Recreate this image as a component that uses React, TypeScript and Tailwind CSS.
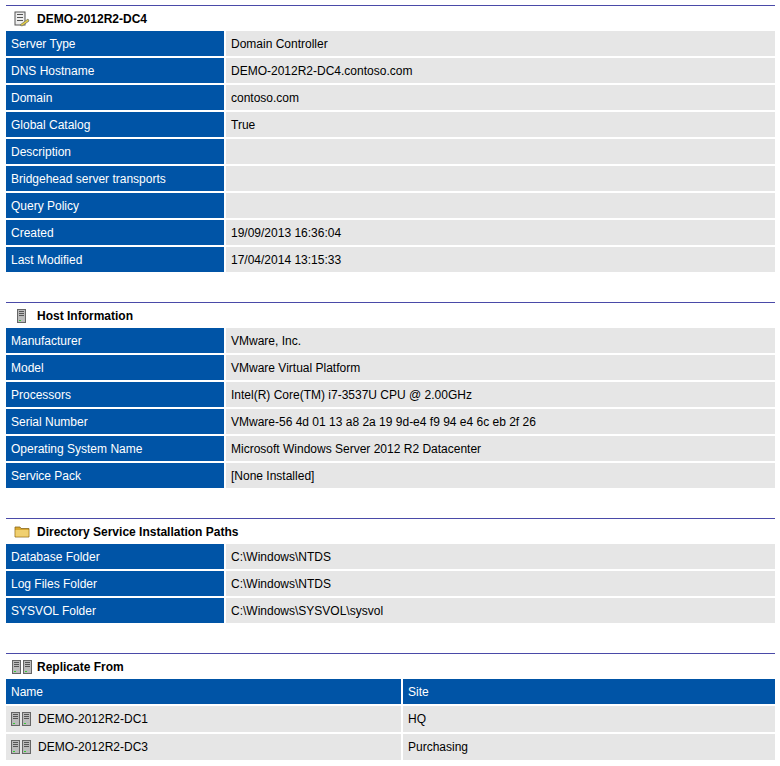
const F = { fontFamily: '"Liberation Sans", Arial, sans-serif' };

function ServerIcon() {
  return (
    <svg width="9" height="14" viewBox="0 0 9 14">
      <rect x="0.5" y="0.5" width="8" height="13" fill="#bbb" stroke="#666" />
      <rect x="2" y="2" width="5" height="1" fill="#555" />
      <rect x="2" y="4" width="5" height="1" fill="#555" />
      <rect x="2" y="6" width="5" height="1" fill="#555" />
      <rect x="2" y="11" width="2" height="1" fill="#3c3" />
    </svg>
  );
}

function DualServer() {
  return (
    <span className="inline-flex gap-[2px]">
      <ServerIcon />
      <ServerIcon />
    </span>
  );
}

function DcIcon() {
  return (
    <svg width="16" height="16" viewBox="0 0 16 16">
      <rect x="1" y="1" width="10" height="13" fill="#eee" stroke="#555" />
      <rect x="3" y="3" width="6" height="1" fill="#555" />
      <rect x="3" y="6" width="6" height="1" fill="#555" />
      <rect x="3" y="9" width="6" height="1" fill="#555" />
      <path d="M6 14 L14 8 L15 10 L8 15 Z" fill="#e8d040" stroke="#776" strokeWidth="0.8" />
    </svg>
  );
}

function FolderIcon() {
  return (
    <svg width="16" height="13" viewBox="0 0 16 13">
      <path d="M1 2 h5 l1 1.5 h8 v8.5 h-14 Z" fill="#d9a830" stroke="#8a6a20" strokeWidth="0.8" />
      <rect x="1.5" y="5" width="13" height="6.5" fill="#f0d070" />
    </svg>
  );
}

function Section({ icon, title, rows, first }: { icon: React.ReactNode; title: string; rows: [string, string][]; first?: boolean }) {
  return (
    <div className={first ? "" : "mt-[30px]"}>
      <div className="border-t border-[#4a4aa8] h-[26px] flex items-center">
        <span className="w-[31px] flex justify-center">{icon}</span>
        <span className="font-bold text-[12px] text-black">{title}</span>
      </div>
      <div className="flex flex-col gap-[2px]">
        {rows.map(([k, v]) => (
          <div key={k} className="flex gap-[2px] h-[25px] text-[12px]">
            <div className="w-[218px] bg-[#0054a6] text-white px-[5px] flex items-center">{k}</div>
            <div className="flex-1 bg-[#e6e6e6] text-black px-[5px] flex items-center">{v}</div>
          </div>
        ))}
      </div>
    </div>
  );
}

export default function App() {
  return (
    <div style={F} className="bg-white w-[780px] h-[766px] pl-[6px] pr-[5px] pt-[5px]">
      <Section
        first
        icon={<DcIcon />}
        title="DEMO-2012R2-DC4"
        rows={[
          ["Server Type", "Domain Controller"],
          ["DNS Hostname", "DEMO-2012R2-DC4.contoso.com"],
          ["Domain", "contoso.com"],
          ["Global Catalog", "True"],
          ["Description", ""],
          ["Bridgehead server transports", ""],
          ["Query Policy", ""],
          ["Created", "19/09/2013 16:36:04"],
          ["Last Modified", "17/04/2014 13:15:33"],
        ]}
      />
      <Section
        icon={<ServerIcon />}
        title="Host Information"
        rows={[
          ["Manufacturer", "VMware, Inc."],
          ["Model", "VMware Virtual Platform"],
          ["Processors", "Intel(R) Core(TM) i7-3537U CPU @ 2.00GHz"],
          ["Serial Number", "VMware-56 4d 01 13 a8 2a 19 9d-e4 f9 94 e4 6c eb 2f 26"],
          ["Operating System Name", "Microsoft Windows Server 2012 R2 Datacenter"],
          ["Service Pack", "[None Installed]"],
        ]}
      />
      <Section
        icon={<FolderIcon />}
        title="Directory Service Installation Paths"
        rows={[
          ["Database Folder", "C:\\Windows\\NTDS"],
          ["Log Files Folder", "C:\\Windows\\NTDS"],
          ["SYSVOL Folder", "C:\\Windows\\SYSVOL\\sysvol"],
        ]}
      />
      <div className="mt-[30px]">
        <div className="border-t border-[#4a4aa8] h-[26px] flex items-center">
          <span className="w-[31px] flex justify-center"><DualServer /></span>
          <span className="font-bold text-[12px] text-black">Replicate From</span>
        </div>
        <div className="flex flex-col gap-[2px] text-[12px]">
          <div className="flex gap-[2px] h-[25px]">
            <div className="w-[395px] bg-[#0054a6] text-white px-[5px] flex items-center">Name</div>
            <div className="flex-1 bg-[#0054a6] text-white px-[5px] flex items-center">Site</div>
          </div>
          {[["DEMO-2012R2-DC1", "HQ"], ["DEMO-2012R2-DC3", "Purchasing"]].map(([n, s]) => (
            <div key={n} className="flex gap-[2px] h-[26px]">
              <div className="w-[395px] bg-[#e6e6e6] px-[5px] flex items-center gap-[7px]"><DualServer />{n}</div>
              <div className="flex-1 bg-[#e6e6e6] px-[5px] flex items-center">{s}</div>
            </div>
          ))}
        </div>
      </div>
    </div>
  );
}
